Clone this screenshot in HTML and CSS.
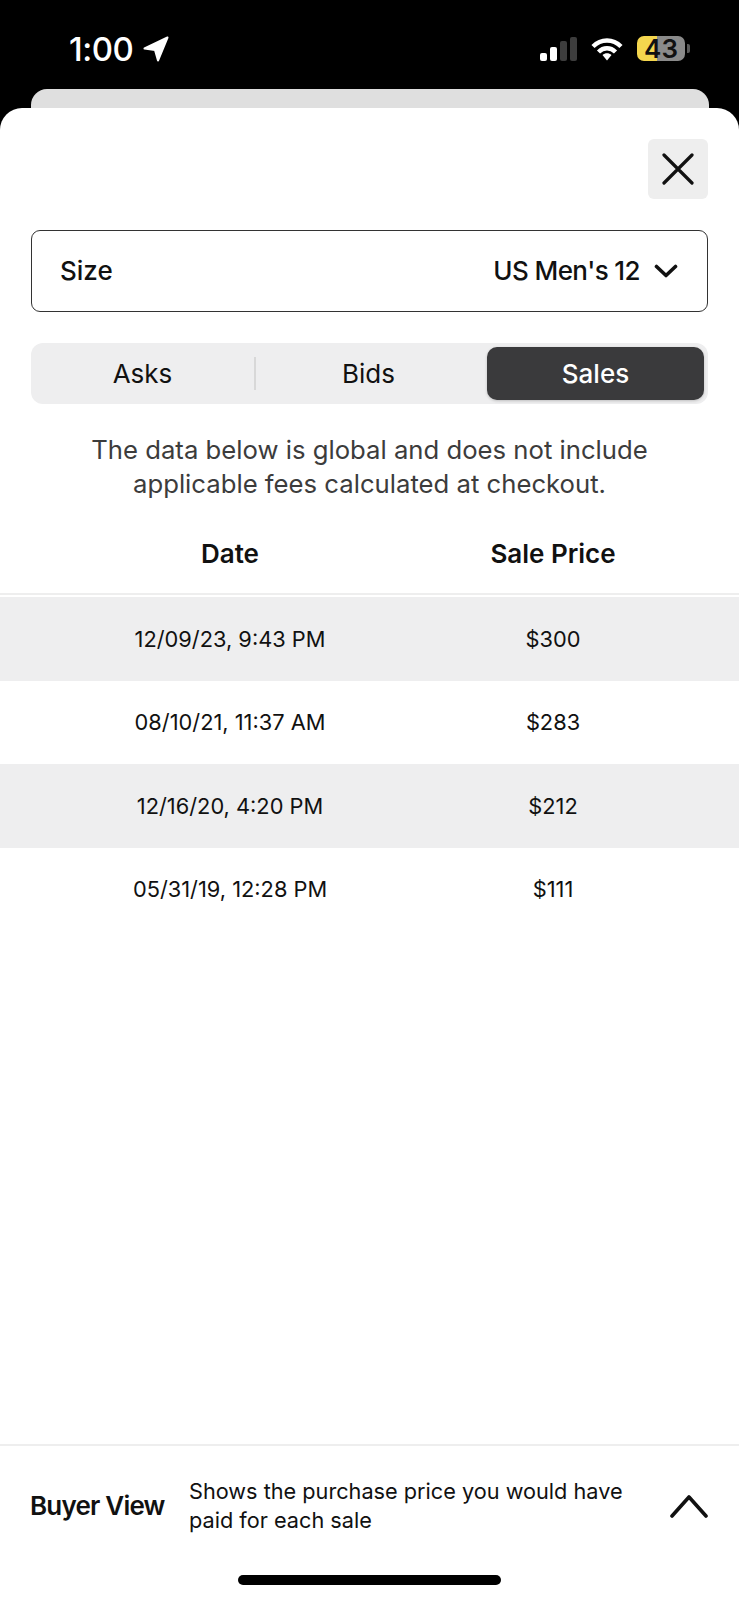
FILE: index.html
```html
<!DOCTYPE html>
<html lang="en">
<head>
  <meta charset="UTF-8" />
  <meta name="viewport" content="width=device-width, initial-scale=1" />
  <title>Sales History</title>
  <link rel="stylesheet" href="styles.css">
</head>
<body>
  <header class="status-bar">
    <div class="status-left">
      <span class="time">1:00</span>
      <svg class="location" width="26" height="26" viewBox="0 0 26 26"><path d="M24.5 1.5 L1.5 12.5 L12 14 L15 24.5 Z" fill="#fff" stroke="#fff" stroke-width="2" stroke-linejoin="round"/></svg>
    </div>
    <div class="status-right">
      <div class="signal">
        <span class="bar bar-1"></span>
        <span class="bar bar-2"></span>
        <span class="bar bar-3"></span>
        <span class="bar bar-4"></span>
      </div>
      <svg class="wifi" width="32" height="24" viewBox="0 0 32 24" fill="none" stroke="#fff" stroke-width="4.4">
        <path d="M2 9.5 C10 1.5 22 1.5 30 9.5"/>
        <path d="M7.5 15 C12.5 10 19.5 10 24.5 15"/>
        <path d="M11.5 18 L16 23.5 L20.5 18 C18 15.6 14 15.6 11.5 18 Z" fill="#fff" stroke="none"/>
      </svg>
      <div class="battery"><span class="battery-level">43</span></div>
      <span class="battery-nub"></span>
    </div>
  </header>

  <div class="back-card"></div>

  <main class="sheet">
    <div class="sheet-top">
      <button class="close" aria-label="Close">
        <svg width="32" height="32" viewBox="0 0 32 32" fill="none" stroke="#111" stroke-width="3.2" stroke-linecap="round"><path d="M2 2 L30 30 M30 2 L2 30"/></svg>
      </button>
    </div>

    <div class="size-select">
      <span>Size</span>
      <span class="size-value">
        US Men's 12
        <svg width="24" height="14" viewBox="0 0 24 14" fill="none" stroke="#111" stroke-width="3.6" stroke-linecap="round" stroke-linejoin="round"><path d="M2.5 2.5 L12 11.5 L21.5 2.5"/></svg>
      </span>
    </div>

    <div class="tabs">
      <div class="tab">Asks</div>
      <div class="tab tab-divider">Bids</div>
      <div class="tab active">Sales</div>
    </div>

    <p class="note">The data below is global and does not include<br>applicable fees calculated at checkout.</p>

    <div class="row table-head">
      <div>Date</div>
      <div>Sale Price</div>
    </div>

    <div class="table-body">
      <div class="row shaded"><div>12/09/23, 9:43 PM</div><div>$300</div></div>
      <div class="row"><div>08/10/21, 11:37 AM</div><div>$283</div></div>
      <div class="row shaded"><div>12/16/20, 4:20 PM</div><div>$212</div></div>
      <div class="row"><div>05/31/19, 12:28 PM</div><div>$111</div></div>
    </div>

    <footer class="buyer-view">
      <div class="buyer-title">Buyer View</div>
      <div class="buyer-desc">Shows the purchase price you would have paid for each sale</div>
      <svg class="buyer-chevron" width="38" height="24" viewBox="0 0 38 24" fill="none" stroke="#111" stroke-width="3.6" stroke-linecap="round" stroke-linejoin="round"><path d="M2 22 L19 3 L36 22"/></svg>
    </footer>

    <div class="home-row"><span class="home-bar"></span></div>
  </main>
</body>
</html>
```

FILE: styles.css
```css
* {
  box-sizing: border-box;
}

html, body {
  margin: 0;
  height: 1600px;
}

body {
  width: 739px;
  background: #000;
  font-family: Inter, "Liberation Sans", sans-serif;
  color: #111;
  display: flex;
  flex-direction: column;
  overflow: hidden;
}

/* status bar */
.status-bar {
  height: 89px;
  display: flex;
  justify-content: space-between;
  align-items: center;
  padding: 8px 49px 0 69px;
  color: #fff;
}

.status-left {
  display: flex;
  align-items: center;
  gap: 10px;
}

.time {
  font-size: 33px;
  font-weight: 500;
  letter-spacing: -0.5px;
}

.status-right {
  display: flex;
  align-items: center;
}

.signal {
  display: flex;
  align-items: flex-end;
  gap: 3px;
  height: 24px;
  margin-right: 14px;
}

.bar {
  width: 7px;
  border-radius: 2px;
  background: #fff;
}

.bar-1 { height: 8px; }
.bar-2 { height: 14px; }
.bar-3 { height: 20px; background: #3d3d3d; }
.bar-4 { height: 24px; background: #3d3d3d; }

.wifi {
  margin-right: 14px;
}

.battery {
  width: 48px;
  height: 25px;
  border-radius: 7px;
  background: linear-gradient(to right, #f4d64e 42%, #8a8a8a 42%);
  text-align: center;
}

.battery-level {
  display: block;
  color: #111;
  font-size: 26px;
  font-weight: 600;
  line-height: 25px;
}

.battery-nub {
  width: 3px;
  height: 9px;
  margin-left: 2px;
  border-radius: 0 2px 2px 0;
  background: #5a5a5a;
}

.back-card {
  height: 19px;
  margin: 0 30px 0 31px;
  border-radius: 16px 16px 0 0;
  background: #dfdfdf;
}

/* sheet */
.sheet {
  flex: 1;
  display: flex;
  flex-direction: column;
  background: #fff;
  border-radius: 22px 22px 0 0;
  padding-top: 31px;
}

.sheet-top {
  display: flex;
  justify-content: flex-end;
  padding-right: 31px;
}

.close {
  width: 60px;
  height: 60px;
  padding: 0;
  border: none;
  border-radius: 6px;
  background: #eee;
  display: flex;
  align-items: center;
  justify-content: center;
}

.size-select {
  height: 82px;
  margin: 31px 31px 0 31px;
  padding: 0 29px 1px 28px;
  border: 1.5px solid #333;
  border-radius: 9px;
  display: flex;
  justify-content: space-between;
  align-items: center;
  font-size: 26px;
  font-weight: 500;
}

.size-value {
  display: flex;
  align-items: center;
  gap: 14px;
  letter-spacing: -0.6px;
}

.tabs {
  height: 61px;
  margin: 31px 31px 0 31px;
  padding: 4px;
  border-radius: 12px;
  background: #eeeeef;
  display: grid;
  grid-template-columns: 215px 237px 217px;
  align-items: center;
  font-size: 26px;
  text-align: center;
}

.tab {
  height: 53px;
  line-height: 53px;
}

.tab-divider {
  position: relative;
}

.tab-divider::before {
  content: "";
  position: absolute;
  left: 4px;
  top: 10px;
  width: 2px;
  height: 33px;
  background: #d8d8d8;
}

.tab.active {
  color: #fff;
  font-weight: 500;
  background: #3a3a3c;
  border-radius: 10px;
  box-shadow: 0 1px 3px rgba(0, 0, 0, 0.2);
}

.note {
  margin: 29px 0 0;
  color: #3c3c3c;
  font-size: 25.7px;
  line-height: 34px;
  text-align: center;
}

.row {
  display: grid;
  grid-template-columns: 460px 186px;
  align-items: center;
  height: 83.5px;
  font-size: 21.8px;
  text-align: center;
}

.table-head {
  height: 94px;
  padding-top: 12px;
  font-size: 26px;
  font-weight: 600;
  border-bottom: 2px solid #eee;
  margin-bottom: 2px;
}

.table-body {
  flex: 1;
}

.shaded {
  background: #eeeeef;
}

.buyer-view {
  height: 115px;
  padding: 6px 31px 0 30px;
  border-top: 2px solid #eee;
  display: flex;
  align-items: center;
}

.buyer-title {
  width: 159px;
  font-size: 26px;
  font-weight: 600;
  letter-spacing: -0.8px;
  white-space: nowrap;
}

.buyer-desc {
  width: 450px;
  font-size: 21.7px;
  line-height: 29px;
}

.buyer-chevron {
  margin-left: auto;
}

.home-row {
  height: 41px;
  padding-top: 16px;
  display: flex;
  justify-content: center;
}

.home-bar {
  width: 263px;
  height: 10px;
  border-radius: 5px;
  background: #000;
}
```
